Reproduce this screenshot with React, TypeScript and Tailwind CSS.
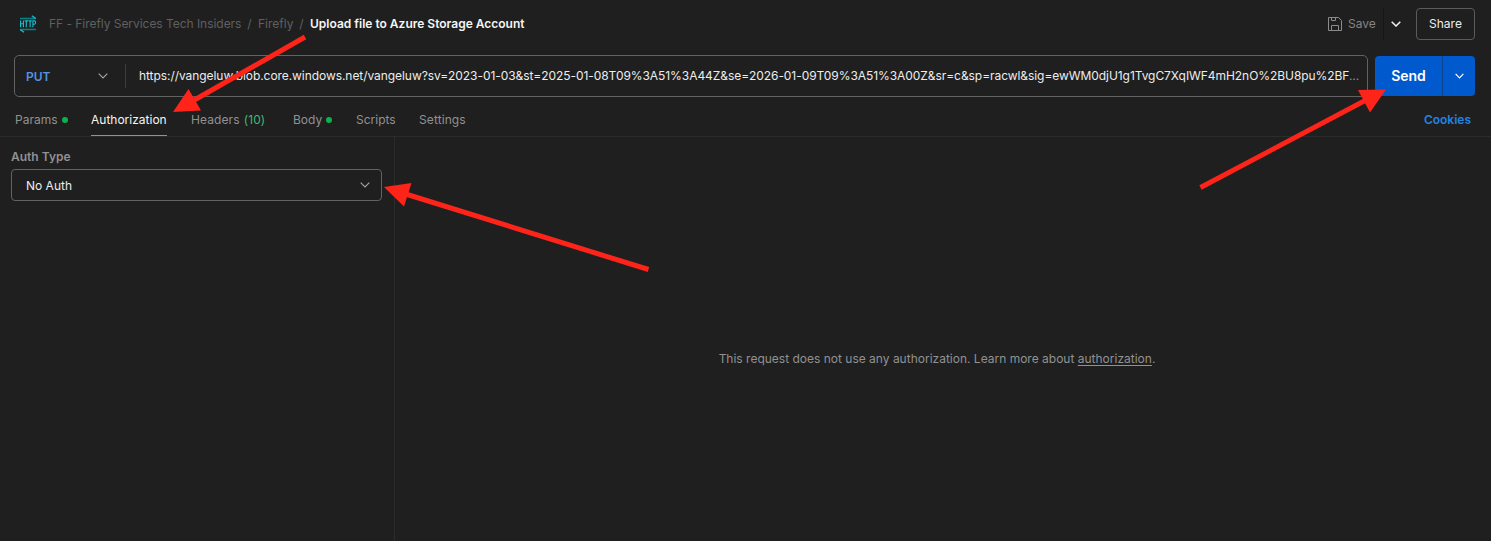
import React from "react";

function Chevron({ className = "", w = 10, sw = 1.1 }: { className?: string; w?: number; sw?: number }) {
  return (
    <svg className={`shrink-0 ${className}`} width={w} height="6" viewBox="0 0 10 6" fill="none" stroke="currentColor" strokeWidth={sw}>
      <path d="M0.7 0.7 5 5 9.3 0.7" />
    </svg>
  );
}

function HttpIcon() {
  return (
    <svg width="18" height="18" viewBox="0 0 18 18" fill="none">
      <path d="M1 3.5H17" stroke="#07818c" strokeWidth="1.5" />
      <path d="M12.8 0.8 16.6 3.4" stroke="#10bccb" strokeWidth="1.3" />
      <path d="M1 14.5H17" stroke="#07818c" strokeWidth="1.5" />
      <path d="M1.3 14.6 5 17.2" stroke="#10bccb" strokeWidth="1.3" />
      <path
        d="M1.6 5.4V12.2M4.4 5.4V12.2M1.6 8.8H4.4M5.6 5.9H9M7.3 5.9V12.2M9.4 5.9H12.8M11.1 5.9V12.2M13.9 12.2V5.9H15.4Q16.6 5.9 16.6 7.5T15.4 9.2H13.9"
        stroke="#10c3d3"
        strokeWidth="1.1"
      />
    </svg>
  );
}

function SaveIcon() {
  return (
    <svg width="16" height="16" viewBox="0 0 16 16" fill="none" stroke="#8c8c8c" strokeWidth="1">
      <path d="M1.5 1.5H11.5L14.5 4.5V14.5H1.5Z" strokeLinejoin="round" />
      <path d="M4.5 1.5V4.5H8.5V1.5M4.5 14.5V9.5H11.5V14.5" />
    </svg>
  );
}

const Dot = () => <span className="ml-1 size-1.5 rounded-full bg-[#0cb24c]" />;

const Arrow = ({ shaft, head }: { shaft: string; head: string }) => (
  <>
    <path d={shaft} stroke="#ff2419" strokeWidth="5" />
    <path d={head} fill="#ff2419" />
  </>
);

export default function App() {
  return (
    <div className="relative flex h-[541px] w-[1491px] flex-col overflow-hidden bg-[#1f1f1f] font-['Inter',sans-serif] text-[12px] leading-4 text-[#919191]">
      <header className="flex h-[47px] items-center pr-4 pl-[19px]">
        <HttpIcon />
        <nav className="ml-3 flex whitespace-pre text-[#5f5f5f]">
          <span className="w-[192px] tracking-[-0.04px]">FF - Firefly Services Tech Insiders</span>
          <span className="w-[17px] text-center">/</span>
          <span className="w-[35px]">Firefly</span>
          <span className="w-[17px] text-center">/</span>
          <span className="font-semibold text-[#f5f5f5]">Upload file to Azure Storage Account</span>
        </nav>
        <div className="ml-auto flex h-8 items-center">
          <SaveIcon />
          <span className="ml-[5px] w-[28px] text-[#848484]">Save</span>
          <span className="ml-[7px] h-8 w-px bg-[#151515]" />
          <Chevron className="ml-[7px] text-[#f2f2f2]" sw={1.5} />
          <button className="ml-[15px] h-8 w-[59px] rounded-[4px] border border-[#5b5b5b] text-[#ededed]">Share</button>
        </div>
      </header>

      <div className="mt-2 flex h-[42px] items-center pr-4 pl-[14px]">
        <div className="flex h-[42px] w-[1354px] items-center rounded-[5px] border border-[#626262]">
          <span className="w-[83px] shrink-0 pt-px pl-[11px] font-semibold text-[#5294e2]">PUT</span>
          <Chevron className="text-[#a6a6a6]" />
          <span className="ml-[17px] h-6 w-px shrink-0 bg-[#3c3c3c]" />
          <span className="ml-[13px] whitespace-nowrap tracking-[-0.062px] text-[#ededed]">
            https://vangeluw.blob.core.windows.net/vangeluw?sv=2023-01-03&amp;st=2025-01-08T09%3A51%3A44Z&amp;se=2026-01-09T09%3A51%3A00Z&amp;sr=c&amp;sp=racwl&amp;sig=ewWM0djU1g1TvgC7XqIWF4mH2nO%2BU8pu%2BF<span className="text-[#919191]">...</span>
          </span>
        </div>
        <div className="ml-[7px] flex h-10 w-[100px] overflow-hidden rounded-[4px] bg-[#0059cd] text-white">
          <button className="w-[67px] text-[14px] font-semibold">Send</button>
          <span className="w-px bg-[#0c438c]" />
          <button className="flex flex-1 items-center justify-center"><Chevron w={9} sw={1.3} /></button>
        </div>
      </div>

      <div className="flex h-10 shrink-0 border-b border-[#2b2b2b] pr-5 pl-[15px]">
        <div className="flex w-[76px] items-center pt-[7px]">Params<Dot /></div>
        <div className="mr-6 flex h-[39px] w-[76px] items-center border-b border-[#ff6c37] pt-[7px] text-[#f5f5f5]">Authorization</div>
        <div className="flex w-[102px] items-center pt-[7px] tracking-[0.1px]">Headers<span className="ml-1 text-[#40b97a]">(10)</span></div>
        <div className="flex w-[63px] items-center pt-[7px]">Body<Dot /></div>
        <div className="flex w-[63px] items-center pt-[7px]">Scripts</div>
        <div className="flex items-center pt-[7px] tracking-[0.1px]">Settings</div>
        <div className="ml-auto flex items-center pt-[7px] font-semibold text-[#2383e2]">Cookies</div>
      </div>

      <main className="flex min-h-0 flex-1">
        <section className="w-[395px] border-r border-[#2b2b2b] pt-3 pl-[11px]">
          <div className="font-semibold">Auth Type</div>
          <div className="mt-1 flex h-8 w-[371px] items-center justify-between rounded-[4px] border border-[#626262] pr-[11px] pl-[14px] text-[#ededed]">
            <span className="pt-0.5">No Auth</span>
            <Chevron className="text-[#a6a6a6]" />
          </div>
        </section>
        <section className="flex flex-1 justify-center pt-[214px] pr-3">
          <p className="h-4 whitespace-nowrap">
            This request does not use any authorization. Learn more about <a className="underline underline-offset-2">authorization</a>.
          </p>
        </section>
      </main>

      <svg className="pointer-events-none absolute inset-0" width="1491" height="541" fill="none">
        <Arrow shaft="M305 37 190 102.5" head="M173 112 188.5 89 201 110.5Z" />
        <Arrow shaft="M648.5 269.5 404 193.5" head="M384 187 411.5 183 404 206.5Z" />
        <Arrow shaft="M1200.5 187.5 1368 99" head="M1386 89.5 1358 90 1370 112.5Z" />
      </svg>
    </div>
  );
}
